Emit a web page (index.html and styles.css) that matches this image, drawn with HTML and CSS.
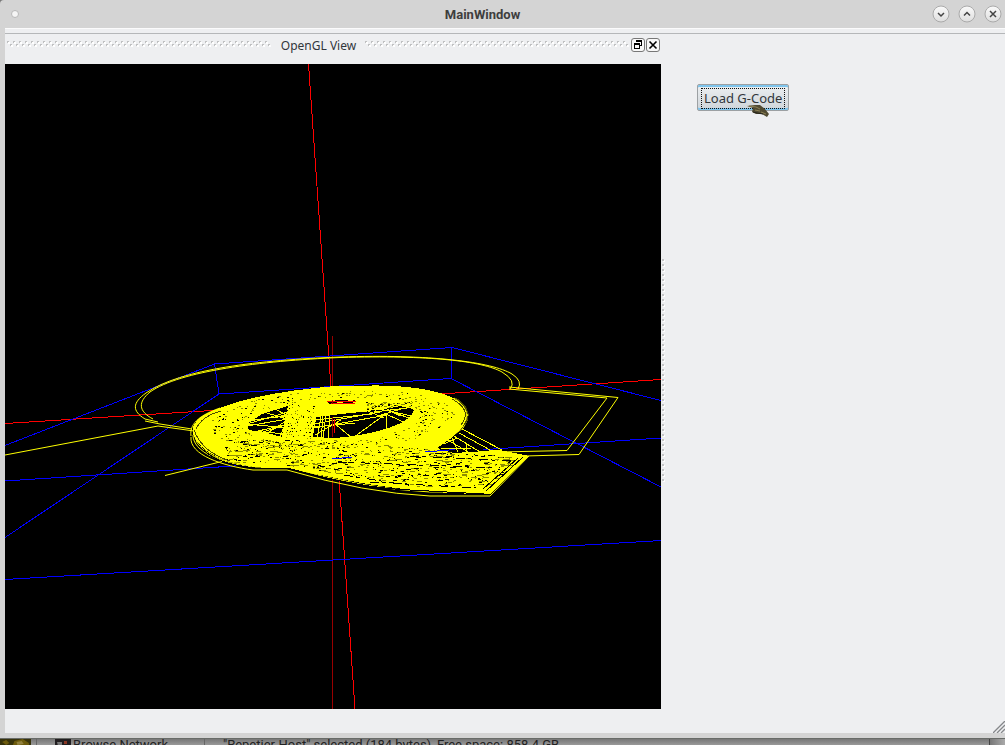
FILE: index.html
```html
<!DOCTYPE html>
<html lang="en">
<head>
<meta charset="utf-8">
<title>MainWindow</title>
<link rel="stylesheet" href="styles.css">
</head>
<body>
<svg class="defs" width="0" height="0" aria-hidden="true">
  <defs>
    <pattern id="grip-h" width="6" height="6" patternUnits="userSpaceOnUse">
      <path d="M1 1h2v2h-2zM4 4h2v2h-2z" fill="#fff"/>
      <path d="M0 0h2v1h-1v1h-1zM3 3h2v1h-1v1h-1z" fill="#bfc0c1"/>
    </pattern>
    <pattern id="grip-v" width="3" height="5" patternUnits="userSpaceOnUse">
      <path d="M1 1h2v2h-2z" fill="#fff"/>
      <path d="M0 0h2v2h-2z" fill="#c4c5c6"/>
    </pattern>
    <linearGradient id="knob" x2="0" y2="1"><stop stop-color="#fafafa"/><stop offset="1" stop-color="#dedede"/></linearGradient>
  </defs>
</svg>
<div class="window">
  <header class="titlebar">
    <button class="menu-dot" aria-label="Window menu"></button>
    <h1 class="title">MainWindow</h1>
    <div class="controls">
      <button class="control" aria-label="Minimize"><svg viewBox="0 0 18 18"><circle cx="9" cy="9" r="8" fill="url(#knob)" stroke="#aaa"/><path d="M6 8l3 3 3-3" class="glyph"/></svg></button>
      <button class="control" aria-label="Maximize"><svg viewBox="0 0 18 18"><circle cx="9" cy="9" r="8" fill="url(#knob)" stroke="#aaa"/><path d="M6 10.500l3-3 3 3" class="glyph"/></svg></button>
      <button class="control" aria-label="Close"><svg viewBox="0 0 18 18"><circle cx="9" cy="9" r="8" fill="url(#knob)" stroke="#aaa"/><path d="M6 6l6 6M12 6l-6 6" class="glyph"/></svg></button>
    </div>
  </header>
  <main class="content">
    <section class="dock">
      <div class="dock-title">
        <svg class="grip" aria-hidden="true"><rect width="100%" height="6" fill="url(#grip-h)"/></svg>
        <h2 class="dock-name">OpenGL View</h2>
        <svg class="grip" aria-hidden="true"><rect width="100%" height="6" fill="url(#grip-h)"/></svg>
        <div class="dock-buttons">
          <button class="dock-button" aria-label="Float"><svg viewBox="0 0 14 14" shape-rendering="crispEdges"><path d="M5.500 3.500h5v4h-2M3.500 6.500h5v4h-5z" fill="none" stroke="#000"/><path d="M5 2h6v2h-6zM3 5h6v2h-6z"/></svg></button>
          <button class="dock-button" aria-label="Close dock"><svg viewBox="0 0 14 14"><path d="M3.500 3.500l7 7M10.500 3.500l-7 7" stroke="#000" stroke-width="1.600"/></svg></button>
        </div>
      </div>
      <svg class="view" viewBox="5 64 656 645" preserveAspectRatio="xMidYMid slice" role="img" aria-label="G-Code toolpath">
        <g fill="none" shape-rendering="crispEdges">
          <g stroke="#f00">
            <path d="M308.500 64L331 388M339 478L355 709M5 423.500L220 410M440 394L661 379.500"/>
            <path d="M332.500 336V386M332.500 478V709" stroke="#900"/>
          </g>
          <path stroke="#00f" d="M5 445.500L214.500 364 452 347.500 661 400.500M214.500 364L219 394 451 378.500 661 487M451.500 348V378M219 394L5 537.500M5 481L661 438M5 579.500L661 540.500"/>
        </g>
        <g fill="none" stroke="#ff0">
          <path d="M158 422L145 419C132 411 132 403 146 393C180 369 260 360 340 357C430 354 492 362 512 374Q523 381 518 389"/>
          <path d="M153 419C138 411 138 402 150 392C180 371 260 361 340 357.500C430 355 482 361 502 372Q517 381 510 389"/>
          <path d="M145 421L160 424 192 429M158 426L194 431M5 455L158 426M165 475.500L228 460"/>
          <path d="M509 389L607 398 567 450.500 500 452M509 387L618 397.500 579 454.500 525 456"/>
        </g>
        <path fill="#ff0" shape-rendering="crispEdges" d="M193 434C190 422 204 413 220 408C250 396 290 390 340 385.500H372C405 385 438 390 453 398C467 405 469 415 464 425L453 437 437 448 455 452 500 450 529 456 490 494C430 494 382 487 340 479L285 468C250 470 202 460 193 434Z"/>
        <path class="specks" fill="#000" shape-rendering="crispEdges"/>
        <path class="specks-dim" fill="#8c8c00" shape-rendering="crispEdges"/>
        <g fill="#000" shape-rendering="crispEdges">
          <path d="M247 424L262 414 288 406 286 415 283 430 282 437 267 433 249 430Z"/>
          <path d="M316 417L350 413 373 411 390 408 400 406 413 409Q416 413 403 422Q376 435 334 438L313 437Z"/>
          <path d="M326 401L352 399.500 356 401 350 404 330 404Z"/>
          <path d="M438 449L455 436 470 444 487 451 454 453Z"/>
        </g>
        <g fill="none" stroke="#ff0" shape-rendering="crispEdges">
          <path d="M247 424L288 412M247 426L288 419M247 424L288 428M249 431L288 434M254 432L288 424M260 433L285 425M267 413L290 420M252 420L287 416M275 409L290 417M266 434L286 421M248 421L288 415M280 437L288 417"/>
          <path d="M316 417L312 439M321 416L317 440M323 416L321 440M326 413L323 440M330 412L328 440M314 424L380 412M314 428L387 415M314 420L372 414M315 435L341 420M334 423L352 438M354 437L387 413M386 413V429M386 414L410 425M375 408L412 416M374 412L415 407M380 405L400 416M315 427L355 423M389 411L415 420M368 411L384 418M378 416L404 408M327 405L358 399"/>
          <path d="M462 429L502 450M459 433L492 451M454 436L480 452M452 438L458 452M448 440L468 452M444 444L457 438M441 449L471 448M467 444L466 452"/>
        </g>
        <g fill="none" stroke="#ff0">
          <path d="M191 437C189 455 223 466 253 470H287Q365 493 430 496H490L529 456M193 435C193 452 220 463 253 467H287Q365 489 430 492H487L525 456M196 441C207 459 235 464 258 466"/>
          <path d="M191 436C189 422 203 414 220 408M196 440C190 426 207 413 222 409M460 401Q474 413 463 428L455 434M454 398Q475 412 461 427"/>
        </g>
        <g fill="none" stroke="#000" shape-rendering="crispEdges">
          <path d="M198 445C212 460 227 465 259 468.500H289Q360 488 410 490L484 494M483 489L518 458M486 491L523 457"/>
          <path d="M196 429Q202 416 221 411M452 399Q473 410 461 425M194 430Q202 452 230 461M456 398Q476 413 463 426" stroke="#4a4a00"/>
          <path d="M344 475L400 484M370 482L476 488M338 462L500 468M410 456L512 461" stroke-dasharray="9 3 4 7"/>
        </g>
        <g fill="none" stroke="#f00" shape-rendering="crispEdges"><path d="M327 401.500H356M331 403H355M334 419V433"/><path d="M332.500 400V404M332.500 417V437" stroke="#900"/><path d="M425 452L455 449.500M332 459L352 457" stroke="#00f"/></g>
      </svg>
    </section>
    <div class="splitter"><svg class="splitter-grip" aria-hidden="true"><rect width="3" height="100%" fill="url(#grip-v)"/></svg></div>
    <section class="panel">
      <button class="load"><span class="load-label">Load G-Code</span>
        <svg class="pointer" viewBox="0 0 23 12" aria-hidden="true"><path d="M0 1L8 0 13 0 18 4 22 9 20 12 15 9 9 9 5 7 6 3Z" fill="#504a31"/><path d="M2 1L9 2 13 4M8 5L13 6M14 7L19 9" fill="none" stroke="#8b8054"/><path d="M6 7L10 8 16 9" fill="none" stroke="#25231b"/></svg>
      </button>
    </section>
    <svg class="resize" viewBox="0 0 12 12" aria-hidden="true"><path d="M0 12L12 0M4 12L12 4M8 12L12 8" stroke="#85878a" stroke-width="1.300"/></svg>
  </main>
</div>
<footer class="behind">
  <svg class="thumb" viewBox="0 0 30 7" preserveAspectRatio="none" aria-hidden="true"><path d="M0 0h30v7H0z" fill="#38330c"/><path d="M2 3l4-2 3 3-3 2zM12 7l2-5 8-2 6 4v3z" fill="#6d5b0d"/><path d="M16 3l5-1 2 3-6 1z" fill="#93823e"/></svg>
  <div class="network"><svg class="net-icon" viewBox="0 0 16 7" aria-hidden="true"><path d="M0 0h16v7H0z" fill="#211e20"/><path d="M2 3h5v4H3z" fill="#777"/><path d="M9 2h3v3h-3z" fill="#8b3824"/></svg><span>Browse Network</span></div>
  <div class="status">"Repetier-Host" selected (184 bytes), Free space: 858.4 GB</div>
  <div class="edge"></div>
</footer>
<script src="specks.js"></script>
</body>
</html>
```
FILE: styles.css
```css
* { box-sizing: border-box; }
body {
  margin: 0;
  height: 100vh;
  overflow: hidden;
  display: flex;
  flex-direction: column;
  background: #777;
  color: #31363b;
  font: 13px/18px "Noto Sans", sans-serif;
}
button { padding: 0; border: 0; background: none; color: inherit; font: inherit; }
svg { display: block; }
h1, h2 { margin: 0; }
.defs { position: absolute; }
.window {
  flex: 1;
  min-height: 0;
  display: flex;
  flex-direction: column;
  background: #d4d4d4;
  border-top-left-radius: 4px;
  padding-bottom: 5px;
  border-bottom: 1px solid #686b68;
}
.titlebar {
  flex: none;
  height: 28px;
  display: flex;
  align-items: center;
  padding: 0 3px 0 11px;
}
.menu-dot {
  width: 8px;
  height: 8px;
  border: 1px solid #b8b8b8;
  border-radius: 50%;
  background: #f5f5f5;
}
.title {
  flex: 1;
  padding: 2px 0 0 14px;
  text-align: center;
  font: bold 13px/18px Roboto, sans-serif;
  color: #3e3e3e;
}
.controls { display: flex; gap: 8px; }
.control { width: 18px; height: 18px; }
.glyph { fill: none; stroke: #444; stroke-width: 1.5; }
.content {
  position: relative;
  flex: 1;
  min-height: 0;
  margin-left: 5px;
  display: grid;
  grid-template-columns: minmax(0, 656fr) 5px minmax(0, 339fr);
  background: #eeeff1;
  border-top: 1px solid #fbfbfc;
}
.content::before {
  content: "";
  position: absolute;
  inset: 4px 0 auto;
  border-top: 1px solid #b5b7b9;
}
.dock {
  min-height: 0;
  display: flex;
  flex-direction: column;
  padding: 6px 0 24px;
}
.dock-title {
  flex: none;
  height: 29px;
  display: flex;
  align-items: flex-start;
  padding: 2px 0 0 2px;
}
.grip { flex: 1; min-width: 0; height: 6px; margin-top: 4px; }
.dock-name { font-size: 12px; font-weight: normal; margin: 0 9px 0 10px; }
.dock-buttons { display: flex; gap: 1px; padding: 1px 1px 0 2px; }
.dock-button {
  width: 14px;
  height: 14px;
  border: 1px solid #777;
  border-radius: 3px;
  background: #f8f8f8;
}
.dock-button svg { width: 14px; height: 14px; margin: -1px; }
.view { flex: 1; width: 100%; min-height: 0; background: #000; }
.splitter { display: flex; align-items: center; justify-content: center; padding-bottom: 20px; }
.splitter-grip { width: 3px; height: 224px; }
.panel { padding: 55px 31px; }
.load {
  position: relative;
  height: 27px;
  padding: 3px;
  border: 1px solid #9ca0a3;
  border-radius: 2px;
  background: linear-gradient(#edf0f2, #ced4d9);
  box-shadow: inset 0 2px #7fc5ed, inset 0 -2px #7fc5ed;
}
.load-label { display: block; padding: 0 2px; border: 1px dotted #111; line-height: 19px; }
.pointer { position: absolute; right: 18px; bottom: -7px; width: 23px; height: 12px; }
.resize { position: absolute; right: 0; bottom: 0; width: 12px; height: 12px; }
.behind {
  flex: none;
  height: 6px;
  overflow: hidden;
  display: flex;
  align-items: flex-start;
  background: linear-gradient(#777, #999);
  color: #222;
  font: 13px/12px Roboto, sans-serif;
}
.thumb { width: 31px; height: 7px; }
.network {
  display: flex;
  gap: 2px;
  width: 169px;
  margin-left: 5px;
  padding-left: 18px;
  border-left: 1px solid #666;
  border-right: 1px solid #666;
}
.net-icon { width: 16px; height: 7px; }
.status { margin-left: 18px; flex: 1; white-space: nowrap; }
.edge { width: 16px; height: 7px; background: linear-gradient(90deg, #777, #aaa); border-left: 1px solid #444; }
```
FILE: specks.js
```js
// Scatters the small gaps that show between neighbouring toolpaths.
let seed = 71;
const rand = () => (seed = (seed * 16807) % 2147483647) / 2147483647;
const paths = { dark: "", dim: "" };
const dash = (tone, x, y, w) => { paths[tone] += `M${Math.round(x)} ${Math.round(y)}h${w}v1h-${w}z`; };
// Lower tail, thickest towards the bottom right.
for (let i = 0; i < 760; i++) {
  const x = 225 + rand() * 285;
  const top = x < 330 ? 440 : 440 + (x - 330) * 0.09;
  const bottom = x < 285 ? 462 : x < 400 ? 466 + (x - 285) * 0.15 : x < 488 ? 486 : 486 - (x - 488);
  dash(i % 5 < 2 ? "dark" : "dim", x, top + rand() * (bottom - top), 1 + Math.floor(rand() * rand() * 7));
}
// Ring around the hub, and the paths crossing it.
for (let i = 0; i < 330; i++) {
  const a = rand() * Math.PI * 2;
  const r = 0.67 + rand() * 0.26;
  dash(i % 4 ? "dim" : "dark", 331 + Math.cos(a) * 132 * r, 420 + Math.sin(a) * 33 * r - Math.cos(a) * 6, 1 + Math.floor(rand() * 2));
}
for (let i = 0; i < 90; i++) {
  dash(i % 2 ? "dim" : "dark", 286 + rand() * 30, 402 + rand() * 36, 1);
  dash(i % 3 ? "dim" : "dark", 366 + rand() * 46, 402 + rand() * 9, 2);
}
document.querySelector(".specks").setAttribute("d", paths.dark);
document.querySelector(".specks-dim").setAttribute("d", paths.dim);
```
